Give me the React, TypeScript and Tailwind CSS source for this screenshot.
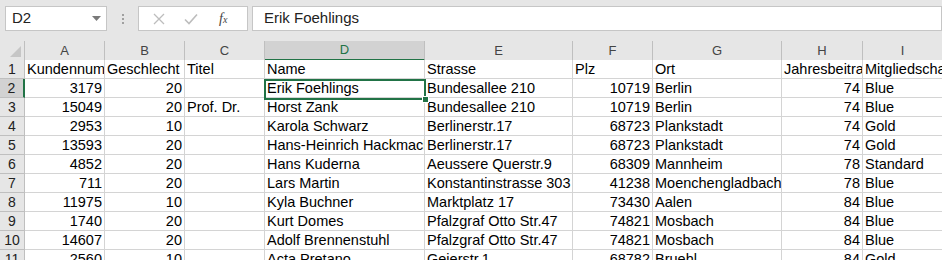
import { FC } from "react";

type Cell = string | number;

const columns = ["A", "B", "C", "D", "E", "F", "G", "H", "I"];

const rows: Cell[][] = [
  ["Kundennummer", "Geschlecht", "Titel", "Name", "Strasse", "Plz", "Ort", "Jahresbeitrag", "Mitgliedschaft"],
  [3179, 20, "", "Erik Foehlings", "Bundesallee 210", 10719, "Berlin", 74, "Blue"],
  [15049, 20, "Prof. Dr.", "Horst Zank", "Bundesallee 210", 10719, "Berlin", 74, "Blue"],
  [2953, 10, "", "Karola Schwarz", "Berlinerstr.17", 68723, "Plankstadt", 74, "Gold"],
  [13593, 20, "", "Hans-Heinrich Hackmack", "Berlinerstr.17", 68723, "Plankstadt", 74, "Gold"],
  [4852, 20, "", "Hans Kuderna", "Aeussere Querstr.9", 68309, "Mannheim", 78, "Standard"],
  [711, 20, "", "Lars Martin", "Konstantinstrasse 303", 41238, "Moenchengladbach", 78, "Blue"],
  [11975, 10, "", "Kyla Buchner", "Marktplatz 17", 73430, "Aalen", 84, "Blue"],
  [1740, 20, "", "Kurt Domes", "Pfalzgraf Otto Str.47", 74821, "Mosbach", 84, "Blue"],
  [14607, 20, "", "Adolf Brennenstuhl", "Pfalzgraf Otto Str.47", 74821, "Mosbach", 84, "Blue"],
  [2560, 10, "", "Acta Pretano", "Geierstr.1", 68782, "Bruehl", 84, "Gold"],
];

const FormulaBar: FC = () => (
  <div className="flex items-start h-[41px] pt-[6px] shrink-0">
    <div className="ml-[5px] w-[102px] h-[25px] bg-white border border-[#c6c6c6] flex items-center justify-between pl-[6px] pr-[5px]">
      <span className="text-[15px] text-[#222]">D2</span>
      <svg width="9" height="5" viewBox="0 0 9 5">
        <path d="M0 0 L9 0 L4.5 5 Z" fill="#7a7a7a" />
      </svg>
    </div>
    <div className="w-[31px] h-[25px] flex flex-col items-center justify-center gap-[2px]">
      <span className="w-[2px] h-[2px] bg-[#a0a0a0]" />
      <span className="w-[2px] h-[2px] bg-[#a0a0a0]" />
      <span className="w-[2px] h-[2px] bg-[#a0a0a0]" />
    </div>
    <div className="w-[110px] h-[25px] bg-white border border-[#c6c6c6] flex items-center">
      <svg width="12" height="12" viewBox="0 0 12 12" className="ml-[14px]">
        <path d="M1 1 L11 11 M11 1 L1 11" stroke="#bdbdbd" strokeWidth="1.3" />
      </svg>
      <svg width="14" height="12" viewBox="0 0 14 12" className="ml-[19px]">
        <path d="M1 6.5 L5 10.5 L13 1.5" stroke="#bdbdbd" strokeWidth="1.6" fill="none" />
      </svg>
      <span className="ml-[21px] text-[14px] italic text-[#444] font-['Liberation_Serif',serif]">
        f<span className="text-[10px]">x</span>
      </span>
    </div>
    <div className="ml-[4px] flex-1 h-[25px] bg-white border border-[#c6c6c6] flex items-center pl-[11px]">
      <span className="text-[15px] text-[#222]">Erik Foehlings</span>
    </div>
  </div>
);

const RowCells: FC<{ row: Cell[]; index: number }> = ({ row, index }) => {
  const active = index === 2;
  return (
    <>
      <div
        className={`flex items-center justify-center text-[14px] border-b border-[#bfbfbf] ${
          active
            ? "bg-[#d2d2d2] text-[#222] border-r-2 border-r-[#217346]"
            : "bg-[#e6e6e6] text-[#222] border-r border-r-[#bfbfbf]"
        }`}
      >
        {index}
      </div>
      {row.map((cell, c) => {
        const isNum = typeof cell === "number";
        return (
          <div
            key={c}
            className={`bg-white border-r border-b border-[#d4d4d4] overflow-hidden whitespace-nowrap flex items-end text-[14.5px] leading-[17px] text-black px-[2px] ${
              isNum ? "justify-end" : "justify-start"
            }`}
          >
            {cell}
          </div>
        );
      })}
    </>
  );
};

const App: FC = () => {
  return (
    <div className="w-[942px] h-[260px] overflow-hidden bg-[#e6e6e6] flex flex-col font-['Liberation_Sans',Arial,sans-serif]">
      <FormulaBar />
      <div className="relative grid grid-cols-[25px_80px_80px_80px_160px_148px_80px_129px_81px_80px] auto-rows-[19px]">
        {/* column headers */}
        <div className="h-[20px] bg-[#e6e6e6] border-r border-b border-[#bfbfbf] flex items-end justify-end overflow-hidden">
          <svg width="11" height="11" viewBox="0 0 11 11" className="mr-[3px] mb-[3px]">
            <path d="M11 0 L11 11 L0 11 Z" fill="#c6c6c6" />
          </svg>
        </div>
        {columns.map((c) => (
          <div
            key={c}
            className={`h-[20px] flex items-center justify-center text-[13px] border-r ${
              c === "D"
                ? "bg-[#d2d2d2] text-[#217346] border-b-2 border-b-[#217346] border-r-[#bfbfbf]"
                : "bg-[#e6e6e6] text-[#444] border-b border-[#bfbfbf]"
            }`}
          >
            {c}
          </div>
        ))}

        {rows.map((row, r) => (
          <RowCells key={r} row={row} index={r + 1} />
        ))}

        {/* active cell */}
        <div className="absolute left-[264px] top-[38px] w-[162px] h-[21px] border-2 border-[#217346] pointer-events-none">
          <div className="absolute right-[-5px] bottom-[-5px] w-[7px] h-[7px] bg-[#217346] border border-white" />
        </div>
      </div>
    </div>
  );
};

export default App;
